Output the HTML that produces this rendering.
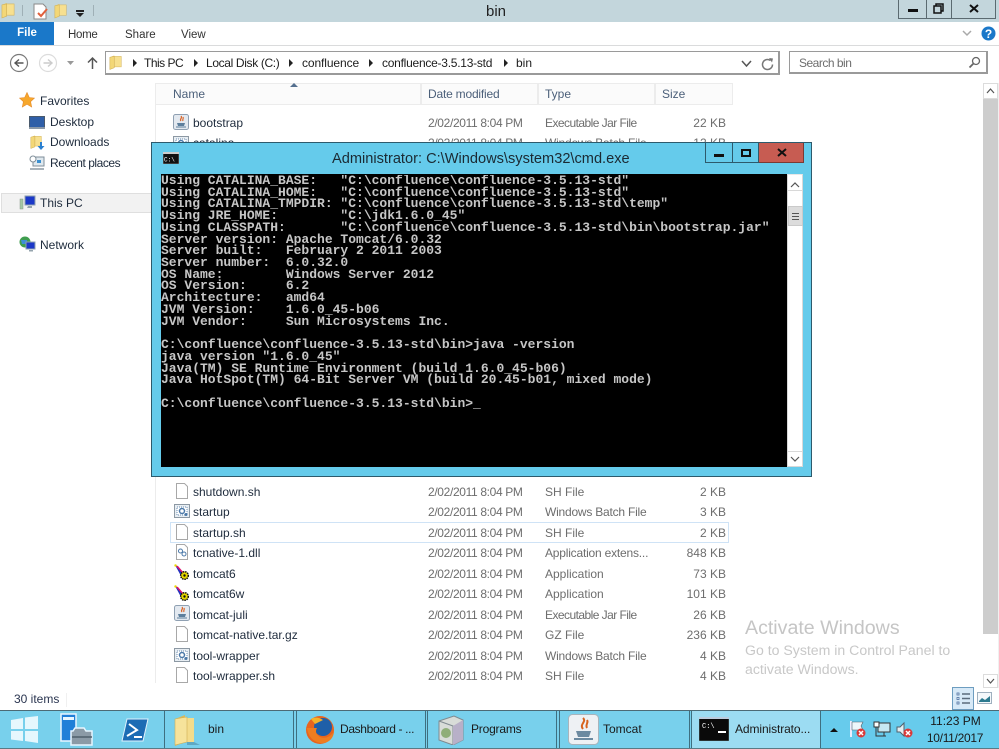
<!DOCTYPE html>
<html><head><meta charset="utf-8"><style>
html,body{margin:0;padding:0;background:#fff}
#r{position:relative;width:999px;height:749px;overflow:hidden;background:#fff;font-family:"Liberation Sans",sans-serif;font-size:12px;color:#222}
#r div,#r svg,#r pre{position:absolute}
.t{white-space:nowrap;line-height:14px}
.g{color:#6d6d6d}
.n{color:#1e2b3c}
.d{color:#6d6d6d;letter-spacing:-.35px}
.w{letter-spacing:-.22px}
.e{letter-spacing:-.55px}
pre{margin:0;font-family:"Liberation Mono",monospace;font-size:13px;line-height:11.72px;color:#c6c6c6;font-weight:bold}
.ar{width:0;height:0;border-left:4px solid #222;border-top:4px solid transparent;border-bottom:4px solid transparent}
</style></head><body><div id="r">
<svg width="0" height="0" style="left:0;top:0"><defs>
<symbol id="doc" viewBox="0 0 16 16"><path d="M2.500.5h8l3 3v12h-11z" fill="#fff" stroke="#a8a8a8"/></symbol>
<symbol id="bat" viewBox="0 0 16 16"><rect x=".5" y="1.500" width="15" height="13" fill="#e8eef3" stroke="#8c98a3"/><rect x="3" y="4" width="10" height="8" fill="#fff" stroke="#6d8db0" stroke-dasharray="1 1"/><circle cx="8" cy="8" r="2.500" fill="none" stroke="#4a78a8" stroke-width="1.500"/><circle cx="12" cy="11.500" r="1.500" fill="#4a78a8"/></symbol>
<symbol id="jar" viewBox="0 0 16 16"><rect x=".5" y=".5" width="15" height="15" rx="2" fill="#e3e9f0" stroke="#8fa0b2"/><path d="M8 2c2 2-2 3 0 5M10 3c1 2-1 2 0 4" fill="none" stroke="#d9662a" stroke-width="1.200"/><path d="M4 9h8l-1 3H5z" fill="#5d7f9d"/><path d="M3 13h10" stroke="#5d7f9d"/></symbol>
<symbol id="cat" viewBox="0 0 16 16"><path d="M1 1l9 9-3 2z" fill="#2030c0"/><path d="M1 1l3 1 6 7-1 1z" fill="#e0106a"/><circle cx="1.500" cy="1.500" r="1.200" fill="#e8d800"/><circle cx="10.500" cy="11.500" r="3.800" fill="#e8d800" stroke="#111" stroke-width="1.500" stroke-dasharray="1.500 .8"/><circle cx="10.500" cy="11.500" r="1.200" fill="#111"/></symbol>
<symbol id="fold" viewBox="0 0 16 16"><path d="M1 2l5-2v14l-5 2z" fill="#e8c65c"/><path d="M6 1h8v12H6z" fill="#f7e08f" stroke="#d4b45c" stroke-width=".6"/><path d="M1 2l5-1v13l-5 2z" fill="#f3d777" stroke="#cfae56" stroke-width=".6"/></symbol>
<symbol id="x" viewBox="0 0 10 10"><circle cx="5" cy="5" r="4.500" fill="#d93a3a"/><path d="M3 3l4 4M7 3l-4 4" stroke="#fff" stroke-width="1.500"/></symbol>
</defs></svg>

<!-- title bar -->
<div style="left:0;top:0;width:999px;height:22px;background:#c3d6dc"></div>
<svg style="left:1px;top:2px" width="15" height="17"><use href="#fold" width="15" height="17"/></svg>
<div style="left:22px;top:5px;width:1px;height:11px;background:#9fb0b6"></div>
<svg style="left:33px;top:3px" width="16" height="17" viewBox="0 0 16 17"><path d="M1 1h9l3 3v12H1z" fill="#fff" stroke="#8a8a8a"/><path d="M5 10l3 3 6-7" fill="none" stroke="#e0603c" stroke-width="2"/></svg>
<svg style="left:54px;top:3px" width="14" height="16"><use href="#fold" width="14" height="16"/></svg>
<div style="left:76px;top:10px;width:8px;height:2px;background:#222"></div>
<div style="left:76px;top:13px;width:0;height:0;border-left:4px solid transparent;border-right:4px solid transparent;border-top:4px solid #222"></div>
<div style="left:93px;top:5px;width:1px;height:11px;background:#9fb0b6"></div>
<div class="t" style="left:486px;top:3px;font-size:15px;line-height:18px;color:#222">bin</div>
<div style="left:898px;top:0;width:98px;height:19px;background:#c3d6dc;border:1px solid #5b6a70;border-top:0;box-sizing:border-box"></div>
<div style="left:926px;top:0;width:1px;height:18px;background:#5b6a70"></div>
<div style="left:951px;top:0;width:1px;height:18px;background:#5b6a70"></div>
<div style="left:908px;top:9px;width:10px;height:3px;background:#111"></div>
<svg style="left:933px;top:3px" width="11" height="11"><rect x="3" y="1" width="7" height="7" fill="none" stroke="#111" stroke-width="1.500"/><rect x="1" y="3" width="7" height="7" fill="#c3d6dc" stroke="#111" stroke-width="1.500"/></svg>
<svg style="left:969px;top:4px" width="10" height="9"><path d="M1 1l8 7M9 1l-8 7" stroke="#111" stroke-width="2"/></svg>

<!-- ribbon -->
<div class="t" style="left:0;top:22px;width:54px;height:23px;background:#1a78c9;color:#fff;font-weight:bold;text-align:center;line-height:23px;font-size:11.500px">File</div>
<div class="t" style="left:68px;top:28px;color:#333;font-size:11.500px;letter-spacing:-.3px">Home</div>
<div class="t" style="left:125px;top:28px;color:#333;font-size:11.500px">Share</div>
<div class="t" style="left:181px;top:28px;color:#333;font-size:11.500px">View</div>
<div style="left:0;top:45px;width:999px;height:1px;background:#dadbdc"></div>
<svg style="left:961px;top:29px" width="12" height="9"><path d="M2 2l4 4 4-4" fill="none" stroke="#a9a9a9" stroke-width="1.500"/></svg>
<svg style="left:981px;top:26px" width="15" height="15"><circle cx="7.500" cy="7.500" r="7" fill="#1a78c9"/><text x="7.500" y="12" font-size="12" font-weight="bold" fill="#fff" text-anchor="middle" font-family="Liberation Sans">?</text></svg>

<!-- nav -->
<svg style="left:9px;top:53px" width="20" height="20"><circle cx="10" cy="10" r="8.500" fill="#fff" stroke="#7a7a7a" stroke-width="1.200"/><path d="M14.500 10h-8M10 6.500L6 10l4 3.500" fill="none" stroke="#555" stroke-width="1.400"/></svg>
<svg style="left:38px;top:53px" width="20" height="20"><circle cx="10" cy="10" r="8.500" fill="#fff" stroke="#dcdcdc" stroke-width="1.200"/><path d="M5.500 10h8M10 6.500l4 3.500-4 3.500" fill="none" stroke="#ccc" stroke-width="1.400"/></svg>
<svg style="left:66px;top:60px" width="9" height="6"><path d="M1 1h7L4.500 5z" fill="#999"/></svg>
<svg style="left:86px;top:56px" width="13" height="14"><path d="M6.500 13V2M2 6.500l4.500-4.500 4.500 4.500" fill="none" stroke="#555" stroke-width="1.500"/></svg>
<div style="left:105px;top:51px;width:675px;height:24px;border:1px solid #8a8a8a;border-width:1px 2px 2px 1px;border-color:#9a9a9a;box-sizing:border-box;background:#fff"></div>
<svg style="left:109px;top:54px" width="14" height="17"><use href="#fold" width="14" height="17"/></svg>
<div class="ar" style="left:133px;top:59px"></div>
<div class="t" style="left:144px;top:56px;color:#1c1c1c;letter-spacing:-.5px">This PC</div>
<div class="ar" style="left:194px;top:59px"></div>
<div class="t" style="left:206px;top:56px;color:#1c1c1c;letter-spacing:-.35px">Local Disk (C:)</div>
<div class="ar" style="left:289px;top:59px"></div>
<div class="t" style="left:302px;top:56px;color:#1c1c1c;letter-spacing:-.1px">confluence</div>
<div class="ar" style="left:369px;top:59px"></div>
<div class="t" style="left:382px;top:56px;color:#1c1c1c;letter-spacing:-.25px">confluence-3.5.13-std</div>
<div class="ar" style="left:504px;top:59px"></div>
<div class="t" style="left:516px;top:56px;color:#1c1c1c">bin</div>
<svg style="left:741px;top:60px" width="11" height="8"><path d="M1 1l4.500 5L10 1" fill="none" stroke="#555" stroke-width="1.500"/></svg>
<svg style="left:761px;top:57px" width="14" height="14"><path d="M11.500 7.500a5 5 0 1 1-2-4" fill="none" stroke="#777" stroke-width="1.500"/><path d="M8 1l4 .5-1 4z" fill="#777"/></svg>
<div style="left:789px;top:51px;width:199px;height:23px;border:1px solid #9a9a9a;border-width:1px 2px 2px 1px;box-sizing:border-box;background:#fff"></div>
<div class="t" style="left:799px;top:56px;color:#6d6d6d;letter-spacing:-.5px">Search bin</div>
<svg style="left:968px;top:56px" width="13" height="13"><circle cx="8" cy="5" r="3.500" fill="none" stroke="#666" stroke-width="1.300"/><path d="M5.500 7.500L1.500 11.500" stroke="#666" stroke-width="1.800"/></svg>

<!-- sidebar -->
<svg style="left:19px;top:92px" width="16" height="16" viewBox="0 0 16 16"><path d="M8 .5l2.300 5 5.200.6-3.900 3.500 1.100 5.400L8 12.300 3.300 15l1.100-5.400L.5 6.100l5.200-.6z" fill="#f6a72c" stroke="#e58a2a" stroke-width=".6"/></svg>
<div class="t" style="left:40px;top:94px;color:#1e2b3c">Favorites</div>
<svg style="left:29px;top:116px" width="16" height="13"><rect x=".5" y=".5" width="15" height="11" fill="#2f5fa8" stroke="#4a5a6c"/><rect x="0" y="11" width="16" height="2" fill="#8a98a8"/></svg>
<div class="t" style="left:50px;top:115px;color:#1e2b3c">Desktop</div>
<svg style="left:30px;top:134px" width="15" height="17"><use href="#fold" width="13" height="16"/><path d="M10 8v4H7.500l3.500 4 3.500-4H12V8z" fill="#2a7fd0"/></svg>
<div class="t" style="left:50px;top:135px;color:#1e2b3c">Downloads</div>
<svg style="left:29px;top:155px" width="16" height="16"><rect x="4" y="2" width="11" height="9" fill="#dfe8ee" stroke="#7f8e99"/><circle cx="4" cy="4" r="3" fill="#fff" stroke="#7f8e99"/><path d="M1 13h14v2H1z" fill="#a8b2ba"/><rect x="8" y="5" width="4" height="3" fill="#3a8fd0"/></svg>
<div class="t" style="left:50px;top:156px;color:#1e2b3c;letter-spacing:-.45px">Recent places</div>
<div style="left:1px;top:193px;width:154px;height:20px;background:#f2f2f2;border:1px solid #dfdfdf;border-right:0;box-sizing:border-box"></div>
<svg style="left:19px;top:195px" width="17" height="16"><rect x="6" y="1" width="10" height="9" fill="#1b38c8" stroke="#8da0b0"/><path d="M9 11h4v2H8z" fill="#95a4ae"/><rect x="1" y="4" width="3" height="10" fill="#a5c8a5" stroke="#8a9a8a" stroke-width=".5"/></svg>
<div class="t" style="left:40px;top:196px;color:#1e2b3c">This PC</div>
<svg style="left:19px;top:236px" width="17" height="16"><circle cx="6" cy="6" r="5.500" fill="#3f9e4f"/><path d="M2 4h6v4H3z" fill="#3d8fd6"/><rect x="7" y="6" width="9" height="7" fill="#1b38c8" stroke="#8da0b0"/><path d="M10 14h4v1.500h-4z" fill="#95a4ae"/></svg>
<div class="t" style="left:40px;top:238px;color:#1e2b3c">Network</div>
<div style="left:155px;top:83px;width:1px;height:600px;background:#ececec"></div>

<!-- column headers -->
<div style="left:156px;top:83px;width:577px;height:22px;background:#fbfbfb;border:1px solid #ececec;border-left:0;box-sizing:border-box"></div>
<div style="left:420px;top:83px;width:2px;height:22px;background:#ececec"></div>
<div style="left:537px;top:83px;width:2px;height:22px;background:#ececec"></div>
<div style="left:654px;top:83px;width:2px;height:22px;background:#ececec"></div>
<div style="left:290px;top:83px;width:0;height:0;border-left:4px solid transparent;border-right:4px solid transparent;border-bottom:4px solid #55708f"></div>
<div class="t" style="left:173px;top:87px;color:#4c607a">Name</div>
<div class="t" style="left:428px;top:87px;color:#4c607a;letter-spacing:-.2px">Date modified</div>
<div class="t" style="left:545px;top:87px;color:#4c607a">Type</div>
<div class="t" style="left:662px;top:87px;color:#4c607a">Size</div>

<!-- scrollbar -->
<div style="left:983px;top:83px;width:16px;height:605px;background:#f0f0f0"></div>
<div style="left:983px;top:83px;width:15px;height:16px;background:#fff;border:1px solid #dcdcdc;box-sizing:border-box"></div>
<svg style="left:986px;top:88px" width="9" height="6"><path d="M1 5l3.500-4L8 5" fill="none" stroke="#555" stroke-width="1.200"/></svg>
<div style="left:983px;top:99px;width:15px;height:535px;background:#cdcdcd"></div>
<div style="left:983px;top:634px;width:15px;height:40px;background:#fff"></div>
<div style="left:983px;top:674px;width:15px;height:14px;background:#fff;border:1px solid #dcdcdc;box-sizing:border-box"></div>
<svg style="left:986px;top:678px" width="9" height="6"><path d="M1 1l3.500 4L8 1" fill="none" stroke="#555" stroke-width="1.200"/></svg>

<!-- files top -->
<svg style="left:173px;top:114px" width="16" height="16"><use href="#jar"/></svg>
<div class="t n" style="left:193px;top:116px">bootstrap</div>
<div class="t d" style="left:428px;top:116px">2/02/2011 8:04 PM</div>
<div class="t g e" style="left:545px;top:116px">Executable Jar File</div>
<div class="t g" style="left:660px;top:116px;width:66px;text-align:right">22 KB</div>
<svg style="left:173px;top:135px" width="16" height="16"><use href="#bat"/></svg>
<div class="t n" style="left:193px;top:136px">catalina</div>
<div class="t d" style="left:428px;top:136px">2/02/2011 8:04 PM</div>
<div class="t g w" style="left:545px;top:136px">Windows Batch File</div>
<div class="t g" style="left:660px;top:136px;width:66px;text-align:right">12 KB</div>

<!-- files bottom -->
<svg style="left:174px;top:483px" width="16" height="16"><use href="#doc"/></svg>
<div class="t n" style="left:193px;top:485px">shutdown.sh</div>
<div class="t d" style="left:428px;top:485px">2/02/2011 8:04 PM</div>
<div class="t g" style="left:545px;top:485px">SH File</div>
<div class="t g" style="left:660px;top:485px;width:66px;text-align:right">2 KB</div>

<svg style="left:174px;top:503px" width="16" height="16"><use href="#bat"/></svg>
<div class="t n" style="left:193px;top:505px">startup</div>
<div class="t d" style="left:428px;top:505px">2/02/2011 8:04 PM</div>
<div class="t g w" style="left:545px;top:505px">Windows Batch File</div>
<div class="t g" style="left:660px;top:505px;width:66px;text-align:right">3 KB</div>

<div style="left:170px;top:522px;width:559px;height:21px;border:1px solid #cfe3f6;box-sizing:border-box"></div>
<svg style="left:174px;top:524px" width="16" height="16"><use href="#doc"/></svg>
<div class="t n" style="left:193px;top:526px">startup.sh</div>
<div class="t d" style="left:428px;top:526px">2/02/2011 8:04 PM</div>
<div class="t g" style="left:545px;top:526px">SH File</div>
<div class="t g" style="left:660px;top:526px;width:66px;text-align:right">2 KB</div>

<svg style="left:174px;top:544px" width="16" height="16"><use href="#doc"/><circle cx="6.500" cy="7" r="2" fill="none" stroke="#4a78a8"/><circle cx="10" cy="10" r="2" fill="none" stroke="#4a78a8"/></svg>
<div class="t n" style="left:193px;top:546px">tcnative-1.dll</div>
<div class="t d" style="left:428px;top:546px">2/02/2011 8:04 PM</div>
<div class="t g" style="left:545px;top:546px;letter-spacing:-.2px">Application extens...</div>
<div class="t g" style="left:660px;top:546px;width:66px;text-align:right">848 KB</div>

<svg style="left:174px;top:564px" width="16" height="16"><use href="#cat"/></svg>
<div class="t n" style="left:193px;top:567px">tomcat6</div>
<div class="t d" style="left:428px;top:567px">2/02/2011 8:04 PM</div>
<div class="t g" style="left:545px;top:567px">Application</div>
<div class="t g" style="left:660px;top:567px;width:66px;text-align:right">73 KB</div>

<svg style="left:174px;top:585px" width="16" height="16"><use href="#cat"/></svg>
<div class="t n" style="left:193px;top:587px">tomcat6w</div>
<div class="t d" style="left:428px;top:587px">2/02/2011 8:04 PM</div>
<div class="t g" style="left:545px;top:587px">Application</div>
<div class="t g" style="left:660px;top:587px;width:66px;text-align:right">101 KB</div>

<svg style="left:174px;top:605px" width="16" height="16"><use href="#jar"/></svg>
<div class="t n" style="left:193px;top:608px">tomcat-juli</div>
<div class="t d" style="left:428px;top:608px">2/02/2011 8:04 PM</div>
<div class="t g e" style="left:545px;top:608px">Executable Jar File</div>
<div class="t g" style="left:660px;top:608px;width:66px;text-align:right">26 KB</div>

<svg style="left:174px;top:626px" width="16" height="16"><use href="#doc"/></svg>
<div class="t n" style="left:193px;top:628px">tomcat-native.tar.gz</div>
<div class="t d" style="left:428px;top:628px">2/02/2011 8:04 PM</div>
<div class="t g" style="left:545px;top:628px">GZ File</div>
<div class="t g" style="left:660px;top:628px;width:66px;text-align:right">236 KB</div>

<svg style="left:174px;top:647px" width="16" height="16"><use href="#bat"/></svg>
<div class="t n" style="left:193px;top:649px">tool-wrapper</div>
<div class="t d" style="left:428px;top:649px">2/02/2011 8:04 PM</div>
<div class="t g w" style="left:545px;top:649px">Windows Batch File</div>
<div class="t g" style="left:660px;top:649px;width:66px;text-align:right">4 KB</div>

<svg style="left:174px;top:667px" width="16" height="16"><use href="#doc"/></svg>
<div class="t n" style="left:193px;top:669px">tool-wrapper.sh</div>
<div class="t d" style="left:428px;top:669px">2/02/2011 8:04 PM</div>
<div class="t g" style="left:545px;top:669px">SH File</div>
<div class="t g" style="left:660px;top:669px;width:66px;text-align:right">4 KB</div>

<!-- activate -->
<div class="t" style="left:745px;top:617px;font-size:19.600px;line-height:23px;color:#c5c5c5">Activate Windows</div>
<div class="t" style="left:745px;top:640px;font-size:14.100px;line-height:20px;color:#c8c8c8">Go to System in Control Panel to</div>
<div class="t" style="left:745px;top:659px;font-size:14.100px;line-height:20px;color:#c8c8c8">activate Windows.</div>

<!-- status -->
<div class="t" style="left:14px;top:692px;color:#2a3550">30 items</div>
<div style="left:66px;top:693px;width:1px;height:14px;background:#f0f0f0"></div>
<svg style="left:952px;top:687px" width="22" height="23"><rect x=".5" y=".5" width="21" height="22" fill="#d7e9f7" stroke="#6d9dc0"/><path d="M10 7h8M10 11.500h8M10 16h8" stroke="#5a6b7c" stroke-width="1.500"/><rect x="5" y="6" width="2" height="2" fill="#fff" stroke="#4a6fa0" stroke-width=".8"/><rect x="5" y="10.500" width="2" height="2" fill="#fff" stroke="#4a6fa0" stroke-width=".8"/><rect x="5" y="15" width="2" height="2" fill="#fff" stroke="#4a6fa0" stroke-width=".8"/></svg>
<svg style="left:977px;top:692px" width="15" height="13"><rect x=".5" y=".5" width="14" height="11" fill="#f4f8fb" stroke="#9fb0bf"/><path d="M2 9l3-3 3 2 5-4v6H2z" fill="#2c7a8f"/></svg>

<!-- taskbar -->
<div style="left:0;top:710px;width:999px;height:39px;background:#78d0ec;border-top:1px solid #4c6a75;border-bottom:1px solid #5a7a85;box-sizing:border-box"></div>
<div style="left:820px;top:711px;width:179px;height:37px;background:#67cbec"></div>
<div style="left:691px;top:711px;width:129px;height:37px;background:#9cdcf2"></div>
<div style="left:164px;top:711px;width:1px;height:37px;background:#3e6f80"></div>
<div style="left:293px;top:711px;width:1px;height:37px;background:#3e6f80"></div><div style="left:296px;top:711px;width:1px;height:37px;background:#3e6f80"></div>
<div style="left:425px;top:711px;width:1px;height:37px;background:#3e6f80"></div><div style="left:427px;top:711px;width:1px;height:37px;background:#3e6f80"></div>
<div style="left:556px;top:711px;width:1px;height:37px;background:#3e6f80"></div><div style="left:559px;top:711px;width:1px;height:37px;background:#3e6f80"></div>
<div style="left:689px;top:711px;width:1px;height:37px;background:#3e6f80"></div><div style="left:691px;top:711px;width:1px;height:37px;background:#3e6f80"></div>
<div style="left:820px;top:711px;width:1px;height:37px;background:#3e6f80"></div>

<svg style="left:11px;top:716px" width="27" height="27" viewBox="0 0 27 27"><path d="M0 4l12-2v11H0zM14 1.500L27 0v13H14zM0 15h12v10L0 23.500zM14 15h13v12l-13-2z" fill="#e6f7fd"/></svg>
<svg style="left:60px;top:713px" width="34" height="33" viewBox="0 0 34 33"><rect x="1" y="1" width="15" height="27" fill="#1f7fd8" stroke="#e8f6ff" stroke-width="1.500"/><rect x="3" y="4" width="11" height="3" fill="#e8f6ff"/><path d="M11 30V18h2l2-3h9l2 3h6v14H11z" fill="#8b9aa6" stroke="#e8f6ff" stroke-width="1.500"/><path d="M12 24h20" stroke="#50606c" stroke-width="1.500"/></svg>
<svg style="left:121px;top:718px" width="28" height="24" viewBox="0 0 28 24"><path d="M6 1h21l-5 22H1z" fill="#1c6cb4" stroke="#dff1fb"/><path d="M8 6l8 6-10 6M13 19h8" fill="none" stroke="#fff" stroke-width="2"/></svg>

<svg style="left:174px;top:715px" width="30" height="31" viewBox="0 0 30 31"><path d="M1 4l10-4v27L1 31z" fill="#dbb95a"/><path d="M11 3h9v24h-9z" fill="#f4dc8b"/><path d="M1 4l12-2v25L1 30z" fill="#f6e39b" stroke="#cfae56" stroke-width=".6"/><path d="M13 27l7 0 6 3H13z" fill="#5fa8c2"/></svg>
<div class="t" style="left:208px;top:722px;color:#1a1a1a">bin</div>

<svg style="left:305px;top:715px" width="30" height="30" viewBox="0 0 30 30"><circle cx="15" cy="15" r="14" fill="#e8641e"/><circle cx="18" cy="12" r="9" fill="#1f5fa8"/><path d="M2 13c1 9 8 16 17 15 6-1 10-6 10-12-3 6-9 8-14 6-4-2-5-6-3-9-4 0-7 0-10 0z" fill="#ef7d20"/><path d="M6 4l4 5 8-4c-4-3-9-3-12-1z" fill="#f5b22a"/></svg>
<div class="t" style="left:340px;top:722px;color:#1a1a1a;letter-spacing:-.35px">Dashboard - ...</div>

<svg style="left:438px;top:715px" width="26" height="30" viewBox="0 0 26 30"><path d="M1 6l15-5 9 4v20l-10 5-14-5z" fill="#d8dcd8" stroke="#7f8a90"/><path d="M1 6l14 5v19" fill="none" stroke="#7f8a90"/><circle cx="8" cy="18" r="5" fill="#8fae78"/><path d="M15 11l10-6v20l-10 5z" fill="#b8b0c8"/></svg>
<div class="t" style="left:471px;top:722px;color:#1a1a1a;letter-spacing:-.2px">Programs</div>

<svg style="left:568px;top:714px" width="31" height="31" viewBox="0 0 31 31"><rect x=".5" y=".5" width="30" height="30" rx="4" fill="#eef1f4" stroke="#a8b4bc"/><path d="M15 4c4 4-4 6 0 11M19 6c2 3-2 4 0 8" fill="none" stroke="#d8641e" stroke-width="2"/><path d="M8 17h15l-2 6H10z" fill="#6c8aa0"/><path d="M6 25h19" stroke="#6c8aa0" stroke-width="2"/></svg>
<div class="t" style="left:603px;top:722px;color:#1a1a1a">Tomcat</div>

<svg style="left:699px;top:717px" width="30" height="24" viewBox="0 0 30 24"><rect width="30" height="24" fill="#0a0a0a" stroke="#8aa" stroke-width=".5"/><path d="M0 0h30v2H0z" fill="#bcd"/><path d="M19 15h8" stroke="#fff" stroke-width="2"/><text x="3" y="11" font-size="7" fill="#fff" font-family="Liberation Mono">C:\</text></svg>
<div class="t" style="left:735px;top:722px;color:#1a1a1a;letter-spacing:-.1px">Administrato...</div>

<div style="left:830px;top:728px;width:0;height:0;border-left:4px solid transparent;border-right:4px solid transparent;border-bottom:4px solid #111"></div>
<svg style="left:849px;top:720px" width="18" height="18"><path d="M2 1v16" stroke="#eef" stroke-width="2"/><path d="M3 2h11l-2 4 2 4H3z" fill="#eef7fb" stroke="#50606c" stroke-width=".6"/><use href="#x" x="7" y="8" width="10" height="10"/></svg>
<svg style="left:873px;top:721px" width="18" height="17"><rect x="5" y="2" width="12" height="9" fill="#c6e8f2" stroke="#333"/><rect x="1" y="1" width="5" height="5" fill="#fff" stroke="#333"/><path d="M3 6v9h10M11 11v4" fill="none" stroke="#333"/></svg>
<svg style="left:896px;top:721px" width="17" height="17"><path d="M1 6h3l4-4v13l-4-4H1z" fill="#e4eef2" stroke="#50606c"/><use href="#x" x="7" y="7" width="10" height="10"/></svg>
<div class="t" style="left:927px;top:714px;width:57px;text-align:center;color:#1a1a1a">11:23 PM</div>
<div class="t" style="left:922px;top:731px;width:66px;text-align:center;color:#1a1a1a;letter-spacing:-.3px">10/11/2017</div>

<!-- cmd window -->
<div style="left:151px;top:142px;width:661px;height:335px;background:#65cbeb;border:1px solid #2d5a6c;box-sizing:border-box"></div>
<svg style="left:163px;top:152px" width="16" height="12"><rect width="16" height="12" fill="#111" stroke="#aaa" stroke-width=".6"/><rect width="16" height="2" fill="#ccc"/><text x="1" y="9.500" font-size="6" fill="#fff" font-family="Liberation Mono">C:\</text></svg>
<div class="t" style="left:332px;top:150px;font-size:14.600px;line-height:18px;color:#1b2a33">Administrator: C:\Windows\system32\cmd.exe</div>
<div style="left:705px;top:143px;width:28px;height:20px;border:1px solid #2d5a6c;border-top:0;box-sizing:border-box;background:#65cbeb"></div>
<div style="left:733px;top:143px;width:26px;height:20px;border:1px solid #2d5a6c;border-width:0 1px 1px 0;box-sizing:border-box;background:#65cbeb"></div>
<div style="left:759px;top:143px;width:45px;height:20px;background:#c75c52;border-bottom:1px solid #7a3a34;border-right:1px solid #7a3a34;box-sizing:border-box"></div>
<div style="left:714px;top:154px;width:10px;height:3px;background:#111"></div>
<div style="left:741px;top:149px;width:6px;height:4px;border:2px solid #111;box-sizing:content-box"></div>
<svg style="left:777px;top:148px" width="10" height="9"><path d="M1 1l8 7M9 1l-8 7" stroke="#111" stroke-width="2"/></svg>

<div style="left:161px;top:174px;width:626px;height:293px;background:#000"></div>
<pre style="left:161px;top:175px;width:624px;height:290px;overflow:hidden">Using CATALINA_BASE:   "C:\confluence\confluence-3.5.13-std"
Using CATALINA_HOME:   "C:\confluence\confluence-3.5.13-std"
Using CATALINA_TMPDIR: "C:\confluence\confluence-3.5.13-std\temp"
Using JRE_HOME:        "C:\jdk1.6.0_45"
Using CLASSPATH:       "C:\confluence\confluence-3.5.13-std\bin\bootstrap.jar"
Server version: Apache Tomcat/6.0.32
Server built:   February 2 2011 2003
Server number:  6.0.32.0
OS Name:        Windows Server 2012
OS Version:     6.2
Architecture:   amd64
JVM Version:    1.6.0_45-b06
JVM Vendor:     Sun Microsystems Inc.

C:\confluence\confluence-3.5.13-std\bin&gt;java -version
java version "1.6.0_45"
Java(TM) SE Runtime Environment (build 1.6.0_45-b06)
Java HotSpot(TM) 64-Bit Server VM (build 20.45-b01, mixed mode)

C:\confluence\confluence-3.5.13-std\bin&gt;_</pre>

<div style="left:787px;top:174px;width:16px;height:293px;background:#fff;border:1px solid #d8d8d8;border-top-color:#e8e8e8;box-sizing:border-box"></div>
<svg style="left:790px;top:181px" width="10" height="7"><path d="M1 6l4-4 4 4" fill="none" stroke="#555" stroke-width="1.200"/></svg>
<div style="left:787px;top:190px;width:16px;height:1px;background:#d8d8d8"></div>
<div style="left:788px;top:206px;width:15px;height:20px;background:#dcdcdc;border:1px solid #cacaca;box-sizing:border-box"></div>
<div style="left:792px;top:213px;width:7px;height:1px;background:#555"></div>
<div style="left:792px;top:216px;width:7px;height:1px;background:#555"></div>
<div style="left:792px;top:219px;width:7px;height:1px;background:#555"></div>
<div style="left:787px;top:451px;width:16px;height:1px;background:#d8d8d8"></div>
<svg style="left:790px;top:456px" width="10" height="7"><path d="M1 1l4 4 4-4" fill="none" stroke="#555" stroke-width="1.200"/></svg>
</div></body></html>
